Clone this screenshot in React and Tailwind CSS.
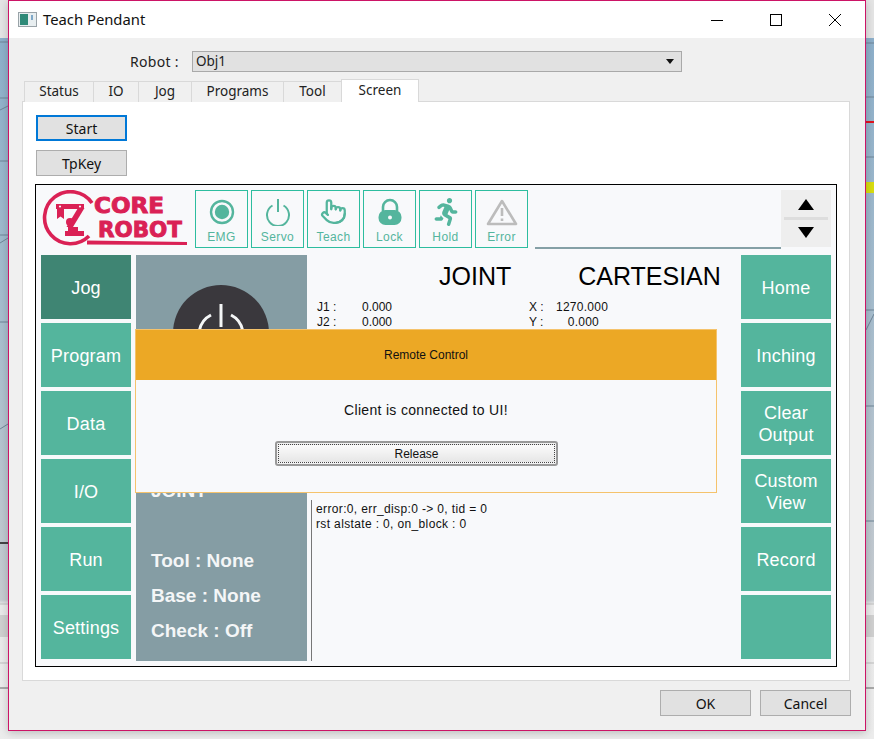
import React from "react";
import { Pointer } from "lucide-react";
import { FaRunning } from "react-icons/fa";

const tabs = ["Status", "IO", "Jog", "Programs", "Tool"];
const tabWidths = ["w-[70px]", "w-[46px]", "w-[54px]", "w-[93px]", "w-[59px]"];
const leftNav = ["Jog", "Program", "Data", "I/O", "Run", "Settings"];
const rightNav = ["Home", "Inching", "Clear Output", "Custom View", "Record", ""];

// Lo que se ve detras de la ventana (el visor CAD)
const Backdrop = () => (
    <svg className="absolute inset-0" width="874" height="739" viewBox="0 0 874 739">
        <g stroke="#6f8596" strokeWidth="1" fill="none">
            <path d="M0 42H8M0 98H8M0 161H8M0 235H8M0 322H8" />
            <path d="M0 110L8 106M0 243L8 238M0 429L8 424" />
            <path d="M866 43H874M866 97H874M866 157H874M866 310H874M866 406H874M866 521H874" />
            <path d="M866 330L874 314" />
        </g>
        <path d="M0 543H8" stroke="#444" strokeWidth="2" />
        <path d="M866 122H874" stroke="#e0141e" strokeWidth="2" />
        <rect x="866" y="182" width="8" height="11" fill="#d8dc10" />
        <path d="M0 604H8M866 604H874M0 663H8M866 663H874" stroke="#bdbdbd" />
        <path d="M0 688H8M866 688H874" stroke="#666" />
        <rect x="0" y="615" width="8" height="22" fill="#cfcfcf" />
        <rect x="866" y="615" width="8" height="22" fill="#cfcfcf" />
    </svg>
);

const TitleIcon = () => (
    <svg width="19" height="15" viewBox="0 0 19 15">
        <rect x="0.5" y="0.5" width="18" height="14" fill="#e8eef0" stroke="#9aa3a8" />
        <rect x="2" y="2" width="8" height="11" fill="#2f8a78" />
        <rect x="13" y="3" width="2" height="5" fill="#7fa8c8" />
    </svg>
);

// Logo dibujado en coordenadas de pagina para cuadrar con la captura
const Logo = () => (
    <svg width="146" height="58" viewBox="41 190 146 58" className="shrink-0">
        <path d="M92 203A26 26 0 1 0 89 236" fill="none" stroke="#da2155" strokeWidth="3.6" />
        <path d="M87 240.5L187 242V245L87 244.5Z" fill="#da2155" />
        <g fill="#da2155">
            <path d="M56 204H84V209H56Z" />
            <path d="M57 209H64V219L60.5 216.5L57 219Z" />
            <path d="M78 208H84.5L73 227H66.5Z" />
            <circle cx="70" cy="222" r="4" />
            <path d="M68 227H78V231H84V236H65V231H68Z" />
        </g>
        <circle cx="60" cy="206.5" r="1.1" fill="#f8f9fb" />
        <circle cx="80" cy="206.5" r="1.1" fill="#f8f9fb" />
        <text x="94" y="213" fontFamily="DejaVu Sans" fontWeight="700" fontSize="21" fill="#da2155" stroke="#da2155" strokeWidth="0.9" textLength="70" lengthAdjust="spacingAndGlyphs">CORE</text>
        <text x="98" y="237" fontFamily="DejaVu Sans" fontWeight="700" fontSize="21" fill="#da2155" stroke="#da2155" strokeWidth="0.9" textLength="84" lengthAdjust="spacingAndGlyphs">ROBOT</text>
    </svg>
);

const EmgIcon = () => (
    <svg width="26" height="26" viewBox="0 0 26 26">
        <circle cx="13" cy="13" r="11" fill="none" stroke="#54b59d" strokeWidth="2.4" />
        <circle cx="13" cy="13" r="7.2" fill="#54b59d" />
    </svg>
);

const ServoIcon = () => (
    <svg width="26" height="28" viewBox="0 0 26 28">
        <path d="M7.5 7.5A11 11 0 1 0 18.5 7.5" fill="none" stroke="#54b59d" strokeWidth="2" />
        <path d="M13 1V14" stroke="#54b59d" strokeWidth="2" />
    </svg>
);

const LockIcon = () => (
    <svg width="26" height="28" viewBox="0 0 26 28">
        <path d="M6 13V9A7 7 0 0 1 20 9V13" fill="none" stroke="#54b59d" strokeWidth="2.6" />
        <rect x="1.5" y="12" width="23" height="15" rx="7" fill="#54b59d" />
        <circle cx="13" cy="19.5" r="2" fill="#f8f9fb" />
    </svg>
);

const ErrorIcon = () => (
    <svg width="32" height="28" viewBox="0 0 32 28">
        <path d="M16 3L30 26H2Z" fill="none" stroke="#bcbcbc" strokeWidth="2.6" strokeLinejoin="round" />
        <path d="M16 10V18M16 20.5V23" stroke="#bcbcbc" strokeWidth="2.6" />
    </svg>
);

const StatusButton = ({ label, children }) => (
    <div className="w-[53px] h-[58px] border border-[#2dbd9f] flex flex-col items-center pt-[5px]">
        <div className="h-[31px] flex items-center justify-center">{children}</div>
        <span className="text-[12px] leading-[14px] tracking-[0.4px] text-[#54b59d] mt-[3px]">{label}</span>
    </div>
);

const NavButton = ({ label, active }) => (
    <div className={`w-[90px] h-[64px] flex items-center justify-center text-center text-white text-[18px] leading-[22px] tracking-[0.2px] px-2 pt-[2px] ${active ? "bg-[#3f8573]" : "bg-[#54b59d]"}`}>
        {label}
    </div>
);

const WinButton = ({ label, className }) => (
    <button className={`w-[91px] h-[26px] bg-[#e1e1e1] text-[14px] leading-none text-[#111] pt-px ${className}`}>
        {label}
    </button>
);

const App = () => {
    return (
        <div className="relative w-[874px] h-[739px] overflow-hidden pl-[8px] bg-[linear-gradient(#e4e4e4_0,#e4e4e4_38px,#8dafca_38px,#a5bccd_300px,#c6cbd0_600px,#e9e9e9_604px,#ececec_100%)] font-['Noto_Sans',sans-serif]">
            <Backdrop />
            <div className="relative w-[858px] h-[731px] border border-[#cc1466] bg-[#f0f0f0] shadow-[0_2px_8px_rgba(0,0,0,0.2)] flex flex-col">
                {/* Barra de titulo */}
                <div className="h-[37px] bg-white flex items-center pl-[9px] shrink-0">
                    <TitleIcon />
                    <span className="ml-[6px] text-[14.8px] text-[#111]">Teach Pendant</span>
                    <div className="ml-auto flex items-center pr-[24px] gap-[46px]">
                        <svg width="12" height="12" viewBox="0 0 12 12"><path d="M0 6.5H12" stroke="#000" /></svg>
                        <svg width="12" height="12" viewBox="0 0 12 12" className="ml-[1px]"><rect x="0.5" y="0.5" width="11" height="11" fill="none" stroke="#000" /></svg>
                        <svg width="12" height="12" viewBox="0 0 12 12" className="ml-[1px]"><path d="M0 0L12 12M12 0L0 12" stroke="#000" /></svg>
                    </div>
                </div>

                {/* Selector de robot */}
                <div className="flex items-center mt-[13px] h-[21px] pl-[121px]">
                    <span className="text-[14px] text-[#222] tracking-[0.3px] w-[62px]">Robot :</span>
                    <div className="w-[490px] h-[21px] bg-[#e1e1e1] border border-[#a9a9a9] flex items-center pl-[3px] pr-[7px] text-[13.5px] text-[#222]">
                        Obj1
                        <svg width="8" height="5" viewBox="0 0 8 5" className="ml-auto"><path d="M0 0H8L4 5Z" fill="#111" /></svg>
                    </div>
                </div>

                {/* Pestañas */}
                <div className="flex items-end h-[23px] mt-[7px] pl-[15px] relative z-10">
                    {tabs.map((tab, i) => (
                        <div key={tab} className={`${tabWidths[i]} h-[21px] bg-[#f0f0f0] border border-b-0 border-[#d9d9d9] -ml-px first:ml-0 flex items-center justify-center text-[13.5px] leading-none text-[#222]`}>
                            {tab}
                        </div>
                    ))}
                    <div className="w-[78px] h-[23px] bg-white border border-b-0 border-[#d9d9d9] -ml-px flex items-center justify-center text-[13.5px] leading-none text-[#222]">
                        Screen
                    </div>
                </div>

                {/* Panel de la pestaña */}
                <div className="w-[828px] h-[580px] -mt-[1px] ml-[13px] bg-white border border-[#d9d9d9] pt-[13px] pl-[12px] flex flex-col items-start shrink-0">
                    <WinButton label="Start" className="ml-px border-2 border-[#0078d7]" />
                    <WinButton label="TpKey" className="ml-px mt-[9px] border border-[#adadad]" />

                    {/* Pantalla del pendant */}
                    <div className="relative w-[802px] h-[483px] mt-[8px] border border-black bg-[#f8f9fb] font-['Liberation_Sans',sans-serif] pt-[5px] pl-[5px]">
                        <div className="flex items-start">
                            <Logo />
                            <div className="flex gap-[3px] ml-[8px]">
                                <StatusButton label="EMG"><EmgIcon /></StatusButton>
                                <StatusButton label="Servo"><ServoIcon /></StatusButton>
                                <StatusButton label="Teach"><Pointer size={27} strokeWidth={2} className="text-[#54b59d]" /></StatusButton>
                                <StatusButton label="Lock"><LockIcon /></StatusButton>
                                <StatusButton label="Hold"><FaRunning size={28} className="text-[#54b59d]" /></StatusButton>
                                <StatusButton label="Error"><ErrorIcon /></StatusButton>
                            </div>
                            <div className="w-[246px] h-[2px] bg-[#85a0a6] mt-[57px] ml-[7px]" />
                            <div className="w-[50px] h-[57px] bg-[#eeeeee] flex flex-col items-center justify-center">
                                <svg width="16" height="11" viewBox="0 0 16 11"><path d="M8 0L16 11H0Z" fill="#000" /></svg>
                                <div className="w-[44px] h-[3px] bg-[#dddddd] my-[7px]" />
                                <svg width="16" height="11" viewBox="0 0 16 11"><path d="M0 0H16L8 11Z" fill="#000" /></svg>
                            </div>
                        </div>

                        <div className="flex mt-[6px]">
                            <div className="flex flex-col gap-[4px]">
                                {leftNav.map((item) => (
                                    <NavButton key={item} label={item} active={item === "Jog"} />
                                ))}
                            </div>

                            {/* Panel gris con el estado */}
                            <div className="w-[171px] h-[406px] ml-[5px] bg-[#859da4] flex flex-col text-[#f4f6f7] font-bold text-[19px] pl-[15px]">
                                <div className="w-[96px] h-[96px] rounded-full bg-[#3a383d] mt-[30px] ml-[22px] flex items-center justify-center shrink-0">
                                    <svg width="64" height="64" viewBox="0 0 64 64">
                                        <path d="M22 14A22 22 0 1 0 42 14" fill="none" stroke="#f4f6f7" strokeWidth="3" />
                                        <path d="M32 3V26" stroke="#f4f6f7" strokeWidth="3" />
                                    </svg>
                                </div>
                                <div className="mt-[98px] leading-[24px]">JOINT</div>
                                <div className="mt-[46px] leading-[24px]">Tool : None</div>
                                <div className="mt-[11px] leading-[24px]">Base : None</div>
                                <div className="mt-[11px] leading-[24px]">Check : Off</div>
                            </div>

                            {/* Coordenadas */}
                            <div className="w-[434px] flex flex-col text-[12px] leading-[15px] text-[#111]">
                                <div className="flex text-[25px] leading-[42px] text-black">
                                    <span className="ml-[132px]">JOINT</span>
                                    <span className="ml-[67px]">CARTESIAN</span>
                                </div>
                                <div className="pl-[10px] mt-[3px] flex">
                                    <div className="w-[212px]">
                                        <div className="flex"><span className="w-[45px]">J1 :</span><span>0.000</span></div>
                                        <div className="flex"><span className="w-[45px]">J2 :</span><span>0.000</span></div>
                                    </div>
                                    <div>
                                        <div className="flex"><span className="w-[27px]">X :</span><span className="w-[52px] text-right tracking-[0.25px]">1270.000</span></div>
                                        <div className="flex"><span className="w-[27px]">Y :</span><span className="w-[43px] text-right tracking-[0.25px]">0.000</span></div>
                                    </div>
                                </div>
                                <div className="ml-[4px] mt-[170px] flex-1 border-l border-[#777777] pl-[4px] pt-[2px] tracking-[0.36px]">
                                    <p>error:0, err_disp:0 -&gt; 0, tid = 0</p>
                                    <p>rst alstate : 0, on_block : 0</p>
                                </div>
                            </div>

                            <div className="flex flex-col gap-[4px]">
                                {rightNav.map((item, i) => (
                                    <NavButton key={i} label={item} />
                                ))}
                            </div>
                        </div>

                        {/* Dialogo de control remoto */}
                        <div className="absolute left-[99px] top-[144px] w-[582px] h-[164px] border border-[#f5c36c] bg-[#f8f9fb] flex flex-col items-center">
                            <div className="w-full h-[50px] bg-[#eca825] flex items-center justify-center text-[12px] text-[#111] shrink-0">
                                Remote Control
                            </div>
                            <p className="text-[14px] leading-[18px] tracking-[0.32px] text-[#111] mt-[21px]">Client is connected to UI!</p>
                            <div className="self-start ml-[139px] w-[283px] h-[25px] mt-[22px] border-2 border-[#999999] rounded-[3px] p-px bg-[#f2f2f2]">
                                <div className="w-full h-full border border-dotted border-[#444444] bg-[linear-gradient(#fbfbfb,#e6e6e6)] flex items-center justify-center text-[12px] text-[#111]">
                                    Release
                                </div>
                            </div>
                        </div>
                    </div>
                </div>

                {/* Botones de la ventana */}
                <div className="flex justify-end gap-[9px] mt-[9px] pr-[14px]">
                    <WinButton label="OK" className="border border-[#adadad]" />
                    <WinButton label="Cancel" className="border border-[#adadad]" />
                </div>
            </div>
        </div>
    );
};

export default App;
